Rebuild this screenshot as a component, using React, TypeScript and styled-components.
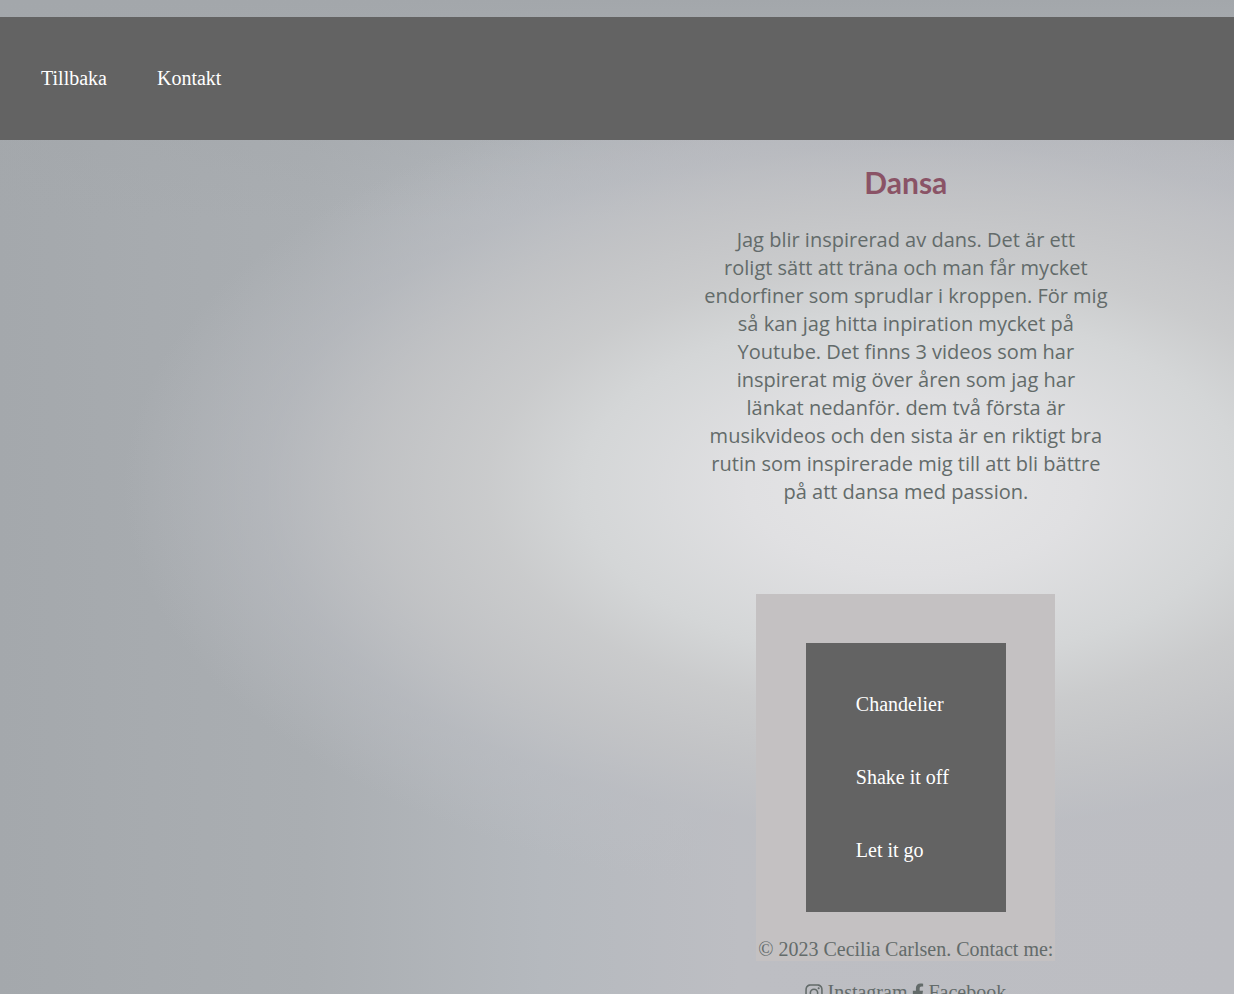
import React from "react";
import styled, { createGlobalStyle } from "styled-components";
import { FaFacebookF, FaInstagram } from "react-icons/fa";

const serif = `"Times New Roman", "Liberation Serif", serif`;

const GlobalStyle = createGlobalStyle`
  *, *::before, *::after { box-sizing: border-box; }
  html { overflow-x: hidden; scrollbar-width: none; }
  body {
    margin: 0;
    font-family: ${serif};
    font-size: 20px;
    line-height: 23px;
    color: #636b6a;
    background-color: #b4b8bc;
    background-image:
      radial-gradient(ellipse 64% 42% at 74% 49%,
        rgba(230, 230, 231, 1) 0%,
        rgba(224, 224, 226, 1) 21%,
        rgba(212, 214, 215, 1) 42%,
        rgba(203, 204, 205, 0.95) 54%,
        rgba(196, 197, 199, 0.85) 68%,
        rgba(188, 190, 195, 0.55) 82%,
        rgba(180, 183, 189, 0) 100%),
      linear-gradient(to bottom, #a3a7ab 0%, rgba(163, 167, 171, 0) 22%),
      linear-gradient(to right, #a4a8ac 0%, #aaaeb2 25%, #b5b9be 44%, #bdbec3 60%, #bcbdc2 100%);
    background-attachment: fixed;
  }
`;

const Page = styled.div`
  padding: 17px 0 20px;
`;

const Nav = styled.nav`
  padding: 50px 41px;
  background: #636363;
`;

const NavList = styled.ul`
  display: flex;
  gap: 50px;
  margin: 0;
  padding: 0;
  list-style: none;
`;

const LightLink = styled.a`
  color: #fff;
  text-decoration: none;
`;

const Content = styled.main`
  width: 400px;
  margin: 24px 0 0 57.2%;
  display: flex;
  flex-direction: column;
  align-items: center;
`;

const Title = styled.h1`
  margin: 0;
  font-family: "Trebuchet MS", Lato, sans-serif;
  font-size: 30px;
  line-height: 36px;
  color: #8a5366;
`;

const Story = styled.p`
  margin: 26px 0 88px;
  font-family: "Comic Sans MS", "Open Sans", sans-serif;
  font-size: 20px;
  line-height: 28px;
  text-align: center;
  white-space: nowrap;
`;

const Panel = styled.section`
  width: 299px;
  padding-top: 49px;
  display: flex;
  flex-direction: column;
  align-items: center;
  background: #c4c1c2;
`;

const VideoList = styled.ul`
  width: 200px;
  margin: 0;
  padding: 50px;
  display: flex;
  flex-direction: column;
  gap: 50px;
  list-style: none;
  background: #636363;
`;

const Copyright = styled.p`
  margin: 26px 0 0;
  white-space: nowrap;
`;

const Social = styled.footer`
  display: flex;
  gap: 5px;
  margin-top: 20px;
`;

const SocialLink = styled.a<{ $iconWidth: number }>`
  display: flex;
  align-items: center;
  gap: 4px;
  color: inherit;
  text-decoration: none;

  svg {
    width: ${(p) => p.$iconWidth}px;
    height: 20px;
  }
`;

const lines = [
  "Jag blir inspirerad av dans. Det är ett",
  "roligt sätt att träna och man får mycket",
  "endorfiner som sprudlar i kroppen. För mig",
  "så kan jag hitta inpiration mycket på",
  "Youtube. Det finns 3 videos som har",
  "inspirerat mig över åren som jag har",
  "länkat nedanför. dem två första är",
  "musikvideos och den sista är en riktigt bra",
  "rutin som inspirerade mig till att bli bättre",
  "på att dansa med passion.",
];

const videos = ["Chandelier", "Shake it off", "Let it go"];

export default function App() {
  return (
    <>
      <GlobalStyle />
      <Page>
        <Nav>
          <NavList>
            <li><LightLink href="#tillbaka">Tillbaka</LightLink></li>
            <li><LightLink href="#kontakt">Kontakt</LightLink></li>
          </NavList>
        </Nav>
        <Content>
          <Title>Dansa</Title>
          <Story>
            {lines.map((line) => (
              <React.Fragment key={line}>{line}<br /></React.Fragment>
            ))}
          </Story>
          <Panel>
            <VideoList>
              {videos.map((video) => (
                <li key={video}><LightLink href="#video">{video}</LightLink></li>
              ))}
            </VideoList>
            <Copyright>© 2023 Cecilia Carlsen. Contact me:</Copyright>
          </Panel>
          <Social>
            <SocialLink href="#instagram" $iconWidth={18}><FaInstagram />Instagram</SocialLink>
            <SocialLink href="#facebook" $iconWidth={12}><FaFacebookF />Facebook</SocialLink>
          </Social>
        </Content>
      </Page>
    </>
  );
}
